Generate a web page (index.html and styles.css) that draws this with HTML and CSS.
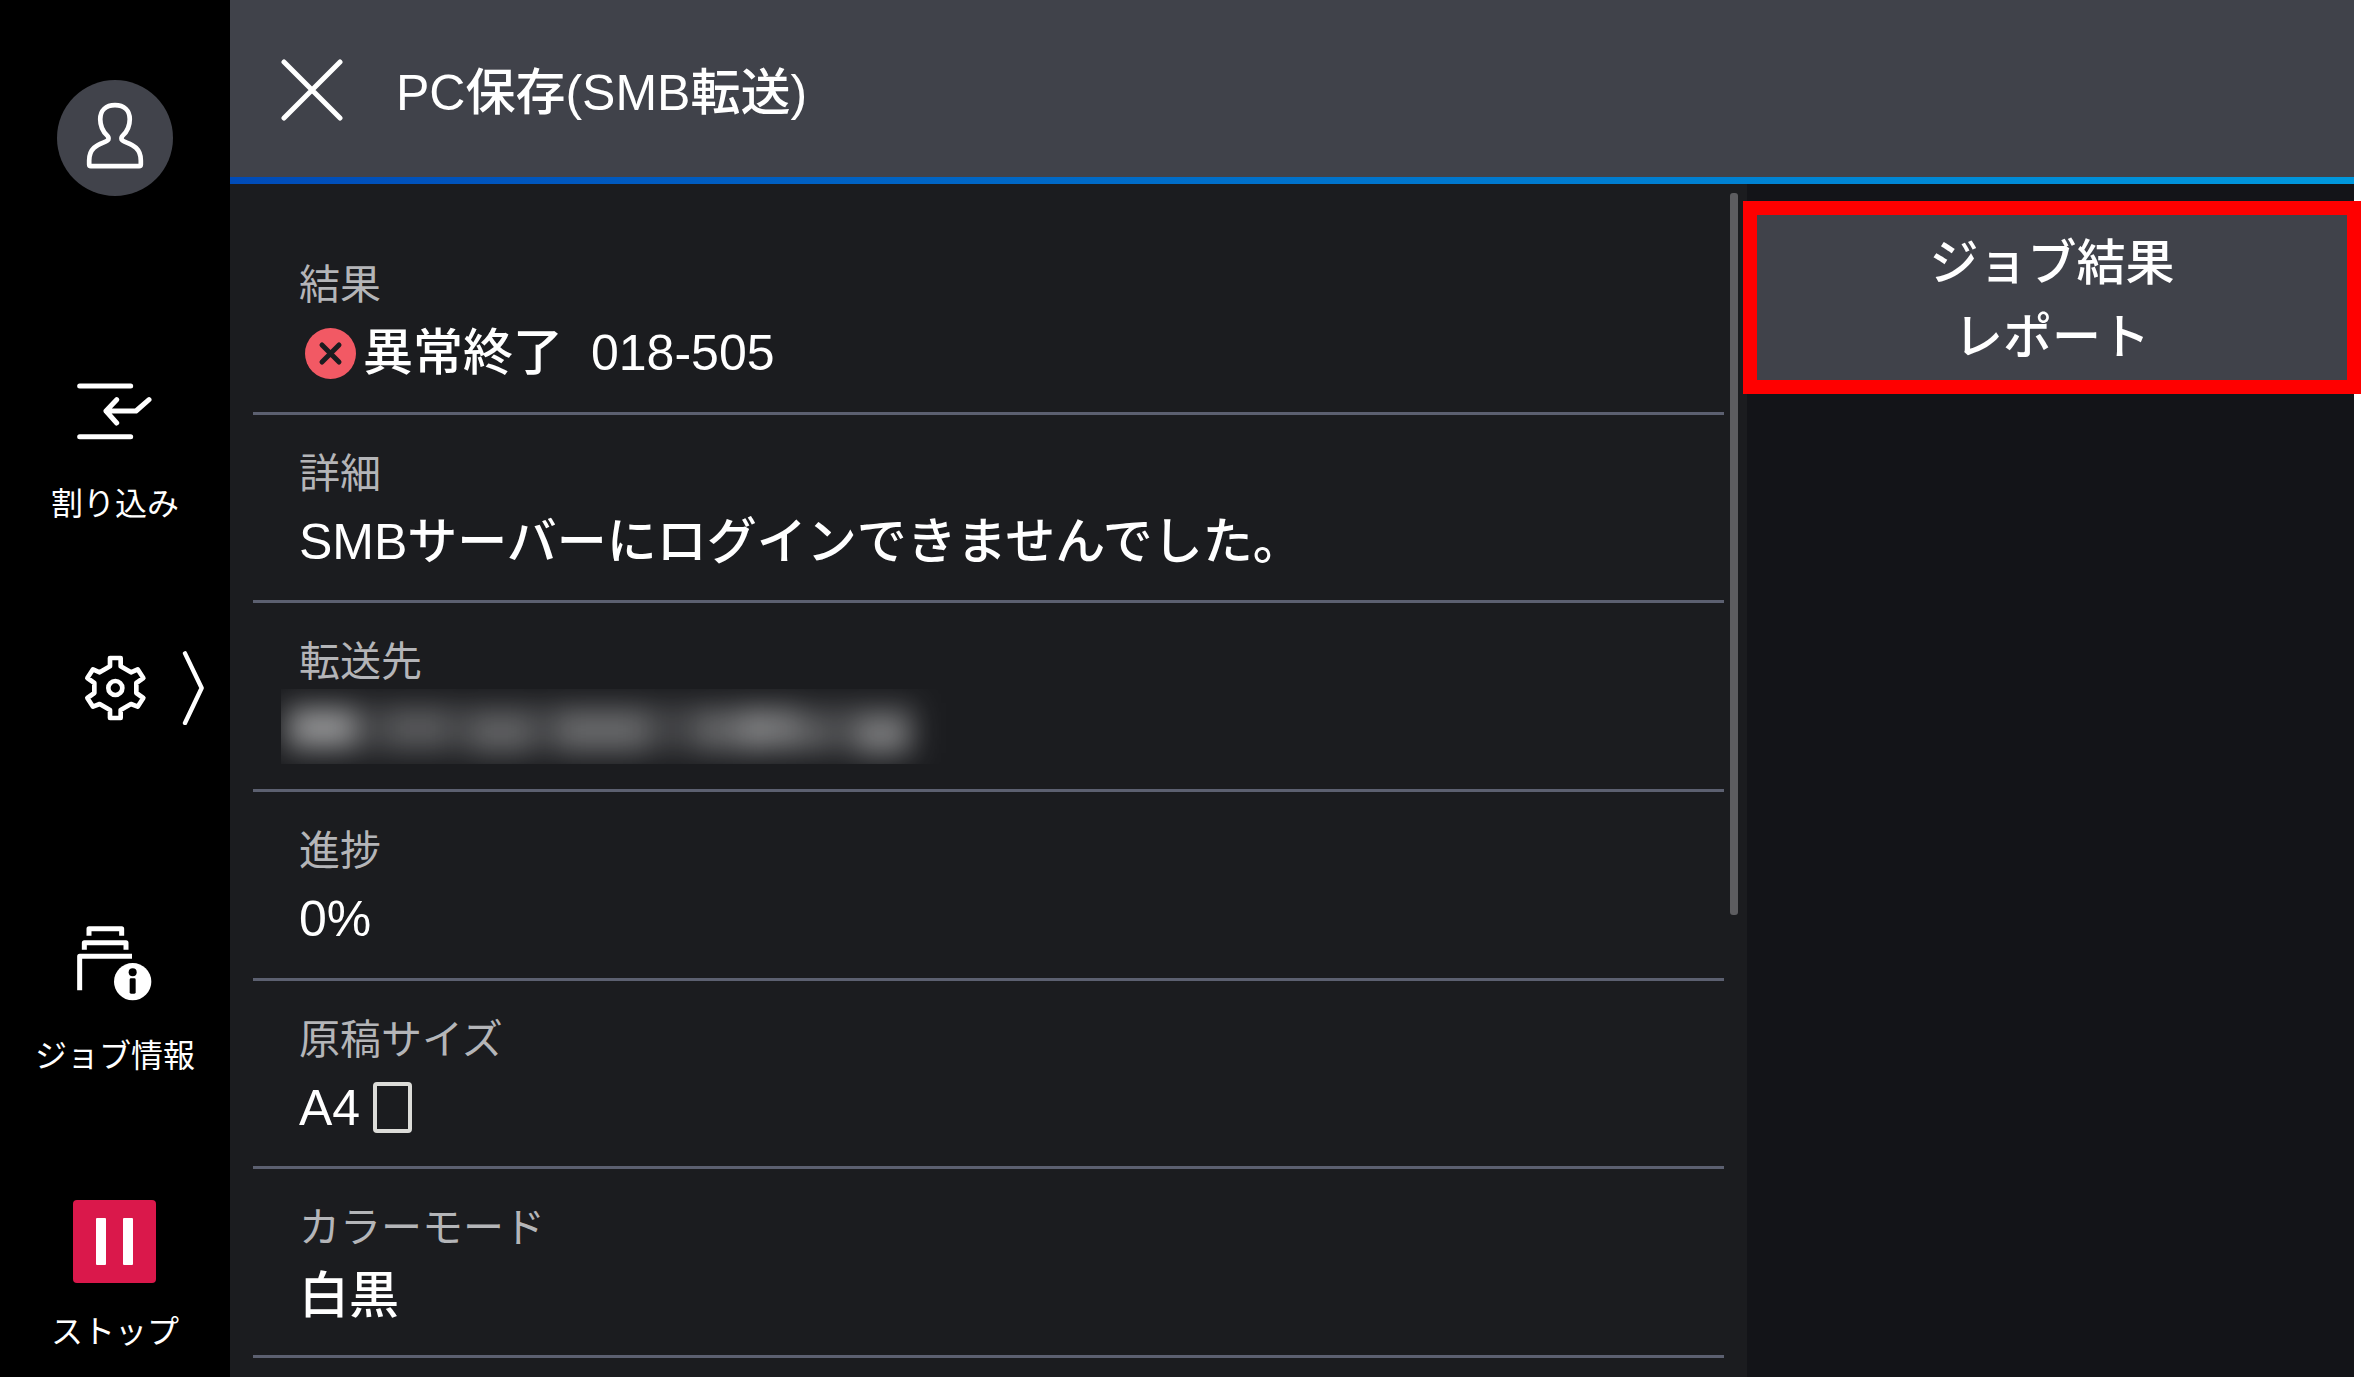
FILE: index.html
```html
<!DOCTYPE html>
<html lang="ja">
<head>
    <meta charset="UTF-8">
    <meta name="viewport" content="width=device-width, initial-scale=1.0">
    <title>PC保存(SMB転送)</title>
    <link rel="stylesheet" href="styles.css">
</head>
<body>

    <div class="screen">
        <nav class="sidebar">
            <button class="avatar" aria-label="User">
                <svg viewBox="172 90 346 346" fill="none" stroke="#fff" stroke-width="14">
                    <path d="M325 268C327 262 326 260 322 256C308 243 301 228 301 207C301 181 318 165 345 165C372 165 389 181 389 207C389 228 382 243 368 256C364 260 363 262 365 268C372 280 422 278 422 330V342Q422 347 417 347H273Q268 347 268 342V330C268 278 318 280 325 268Z"/>
                </svg>
            </button>

            <button class="side-btn interrupt">
                <svg class="side-icon" viewBox="233 972 225 225" fill="none" stroke="#fff" stroke-width="15" stroke-linecap="round" stroke-linejoin="round">
                    <path d="M241 1008H394M241 1160H394M352 1049L320 1083L352 1119M320 1083H410L449 1049"/>
                </svg>
                <span>割り込み</span>
            </button>

            <button class="settings" aria-label="Settings">
                <svg class="side-icon" viewBox="233 147 225 225" fill="none" stroke="#fff" stroke-width="14" stroke-linejoin="round">
                    <path d="M329 171H361V196L392 214L412 205L429 231L408 246V276L429 291L412 317L392 309L361 327V351H329V327L298 309L278 317L261 291L282 276V246L261 231L278 205L298 214L329 196Z"/>
                    <circle cx="345" cy="261" r="21"/>
                </svg>
                <svg class="chevron" viewBox="546 147 69 225" fill="none" stroke="#fff" stroke-width="13" stroke-linecap="round" stroke-linejoin="round">
                    <path d="M555 157L605 261L555 366"/>
                </svg>
            </button>

            <button class="side-btn job-info">
                <svg class="side-icon" viewBox="233 977 225 225" fill="none" stroke="#fff" stroke-width="15" stroke-linejoin="round">
                    <path d="M269 1006V985H367V1006M255 1048V1027H380V1048"/>
                    <path d="M241 1170V1068H398"/>
                    <circle cx="400" cy="1144" r="56" fill="#fff" stroke="none"/>
                    <circle cx="400" cy="1116" r="12" fill="#000" stroke="none"/>
                    <rect x="391" y="1134" width="18" height="46" rx="4" fill="#000" stroke="none"/>
                </svg>
                <span>ジョブ情報</span>
            </button>

            <button class="side-btn stop">
                <svg class="stop-icon" viewBox="0 0 83 83">
                    <rect width="83" height="83" rx="4" fill="#da184b"/>
                    <rect x="23" y="18" width="10" height="47" rx="1" fill="#fff"/>
                    <rect x="50" y="18" width="10" height="47" rx="1" fill="#fff"/>
                </svg>
                <span>ストップ</span>
            </button>
        </nav>

        <main class="main">
            <header class="header">
                <button class="close-btn" aria-label="Close">
                    <svg viewBox="0 0 62 62" fill="none" stroke="#fff" stroke-width="5" stroke-linecap="round">
                        <path d="M3 3L59 59M59 3L3 59"/>
                    </svg>
                </button>
                <h1>PC保存(SMB転送)</h1>
            </header>

            <div class="content">
                <dl class="details">
                    <div class="row">
                        <dt>結果</dt>
                        <dd>
                            <svg class="error-icon" viewBox="0 0 51 51">
                                <circle cx="25.5" cy="25.5" r="25.5" fill="#f25964"/>
                                <path d="M17 17L34 34M34 17L17 34" stroke="#1b1c1f" stroke-width="5" stroke-linecap="round"/>
                            </svg>
                            <span>異常終了</span>
                            <span class="code">018-505</span>
                        </dd>
                    </div>
                    <div class="row">
                        <dt>詳細</dt>
                        <dd>SMBサーバーにログインできませんでした。</dd>
                    </div>
                    <div class="row">
                        <dt>転送先</dt>
                        <dd>
                            <!-- hidden address -->
                            <svg class="masked" viewBox="0 0 670 75">
                                <defs>
                                    <filter id="soft" x="-20%" y="-100%" width="140%" height="300%">
                                        <feGaussianBlur stdDeviation="14"/>
                                    </filter>
                                </defs>
                                <g filter="url(#soft)" fill="#fff">
                                    <rect x="0" y="14" width="636" height="50" fill-opacity="0.17"/>
                                    <rect x="10" y="20" width="64" height="38" fill-opacity="0.42"/>
                                    <rect x="108" y="20" width="58" height="40" fill-opacity="0.12"/>
                                    <rect x="190" y="26" width="60" height="40" fill-opacity="0.17"/>
                                    <rect x="276" y="22" width="90" height="42" fill-opacity="0.2"/>
                                    <rect x="416" y="22" width="60" height="40" fill-opacity="0.18"/>
                                    <rect x="464" y="20" width="54" height="40" fill-opacity="0.28"/>
                                    <rect x="518" y="32" width="36" height="30" fill-opacity="0.14"/>
                                    <rect x="574" y="28" width="52" height="38" fill-opacity="0.3"/>
                                </g>
                            </svg>
                        </dd>
                    </div>
                    <div class="row">
                        <dt>進捗</dt>
                        <dd>0%</dd>
                    </div>
                    <div class="row">
                        <dt>原稿サイズ</dt>
                        <dd>A4<span class="paper"></span></dd>
                    </div>
                    <div class="row">
                        <dt>カラーモード</dt>
                        <dd>白黒</dd>
                    </div>
                </dl>

                <div class="scrollbar"><div class="thumb"></div></div>

                <aside class="actions">
                    <button class="report-btn">ジョブ結果<br>レポート</button>
                </aside>
            </div>
        </main>
    </div>

</body>
</html>
```

FILE: styles.css
```css
/* General Styles */
* {
    box-sizing: border-box;
}
html {
    background: #fff;
}
body {
    margin: 0;
    font-family: "Liberation Sans", "Noto Sans CJK JP", sans-serif;
    color: #fff;
    overflow: hidden;
}
button {
    padding: 0;
    border: none;
    background: none;
    color: inherit;
    font-family: inherit;
    cursor: pointer;
}
svg {
    display: block;
}
.screen {
    display: flex;
    min-height: 100vh;
    margin-right: 7px;
    background: #1b1c1f;
}

/* Sidebar */
.sidebar {
    display: flex;
    flex-direction: column;
    align-items: center;
    flex: 0 0 230px;
    padding-top: 80px;
    background: #000;
}
.avatar {
    width: 116px;
    height: 116px;
    border-radius: 50%;
    background: #41434b;
}
.side-btn {
    display: flex;
    flex-direction: column;
    align-items: center;
    gap: 31px;
    font-size: 32px;
    line-height: 48px;
}
.side-icon {
    width: 75px;
    height: 75px;
}
.interrupt {
    margin-top: 178px;
}
.settings {
    display: grid;
    grid-template-columns: 1fr auto 1fr;
    width: 100%;
    margin-top: 122px;
}
.settings .side-icon {
    grid-column: 2;
}
.chevron {
    width: 23px;
    height: 75px;
    margin-left: 29px;
}
.job-info {
    margin-top: 201px;
}
.stop {
    margin-top: 120px;
    gap: 25px;
}
.stop-icon {
    width: 83px;
    height: 83px;
}

/* Header */
.main {
    display: flex;
    flex-direction: column;
    flex: 1;
    min-width: 0;
}
.header {
    display: flex;
    align-items: center;
    gap: 53px;
    height: 184px;
    padding: 2px 51px 0;
    background: #40424a;
    border-bottom: 7px solid;
    border-image: linear-gradient(90deg, #004bb8, #0098dd) 1;
}
.close-btn svg {
    width: 62px;
    height: 62px;
}
h1 {
    margin: 0;
    padding-top: 6px;
    font-size: 50px;
    font-weight: 500;
    line-height: 76px;
}

/* Details */
.content {
    display: flex;
    flex: 1;
}
.details {
    display: flex;
    flex-direction: column;
    flex: 1;
    margin: 0;
    padding: 42px 6px 19px 23px;
}
.row {
    flex: 1;
    padding: 29px 46px 18px;
    border-bottom: 3px solid #5c6070;
}
dt {
    font-size: 41px;
    line-height: 60px;
    color: #b4b5b8;
}
dd {
    display: flex;
    align-items: center;
    height: 76px;
    margin: 0;
    font-size: 50px;
    font-weight: 500;
    line-height: 76px;
}
.error-icon {
    width: 51px;
    height: 51px;
    margin: 0 7px 0 6px;
}
.code {
    margin-left: 28px;
}
.masked {
    width: 670px;
    height: 75px;
    margin: -8px 0 0 -18px;
}
.paper {
    width: 39px;
    height: 51px;
    margin-left: 13px;
    border: 4px solid #dcdcd8;
    border-radius: 4px;
}

/* Scrollbar */
.scrollbar {
    width: 17px;
    padding-top: 9px;
}
.thumb {
    width: 8px;
    height: 61%;
    border-radius: 3px;
    background: #5d5d60;
}

/* Actions */
.actions {
    flex: 0 0 607px;
    padding: 31px 7px 0 10px;
    background: #131418;
}
.report-btn {
    width: 100%;
    padding: 11px 0 6px;
    background: #40424a;
    outline: 14px solid #f00;
    font-size: 49px;
    font-weight: 500;
    line-height: 74px;
}
```
